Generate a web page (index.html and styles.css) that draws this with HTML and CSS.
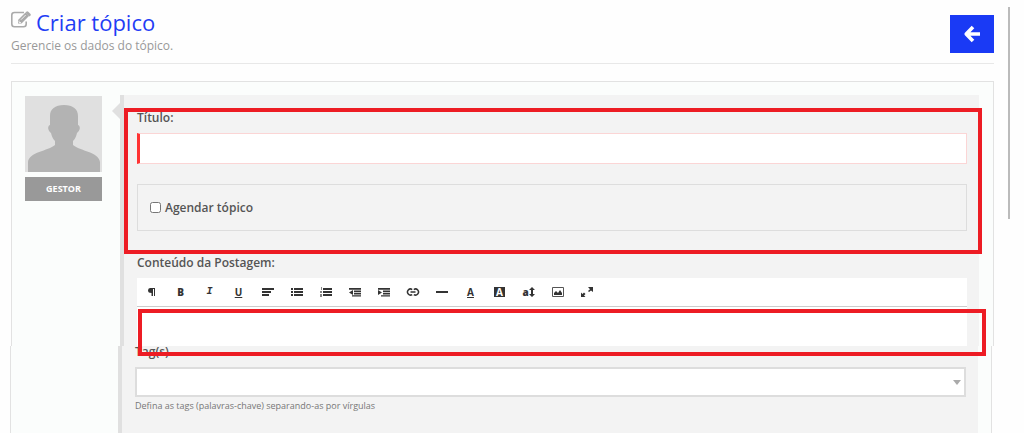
FILE: index.html
```html
<!DOCTYPE html>
<html lang="pt-BR">
<head>
  <meta charset="UTF-8" />
  <title>Criar tópico</title>
  <link rel="stylesheet" href="styles.css">
</head>
<body>
  <header class="page-header">
    <div>
      <h1>
        <svg class="edit-icon" width="21" height="18" viewBox="0 0 21 18" fill="none" stroke="#aaa">
          <path stroke-width="1.600" d="M13 1.500H3.500Q.8 1.500.8 4v9q0 2.700 2.700 2.700h9q2.700 0 2.700-2.700v-2.500"/>
          <path fill="#aaa" stroke="none" d="M7 9 14.500 1.500l3.500 3.500L10.500 12.500H7zM15.300.8q1-1 2 0l2 2q1 1 0 2l-.7.700-4-4z"/>
          <path stroke="#fefefe" stroke-width=".8" d="M10 8.700l4.700-4.700M8 9.500v2h2"/>
        </svg>
        Criar tópico
      </h1>
      <p>Gerencie os dados do tópico.</p>
    </div>
    <button class="back-btn" type="button" title="Voltar">
      <svg width="18" height="18" viewBox="0 0 18 18" fill="none" stroke="#fff" stroke-width="3.600">
        <path stroke-linejoin="round" d="M10 2 3.200 9l6.800 7M3.500 9H17"/>
      </svg>
    </button>
  </header>

  <form class="topic">
    <div class="panel">
      <aside class="author">
        <svg class="avatar" width="77" height="76" viewBox="0 0 77 76">
          <path fill="#e0e0e0" d="M0 0h77v76H0z"/>
          <path fill="#b3b3b3" d="M39 9c9 0 14 4 14 11v9c3 1 2 6-1 8-1 4-2 6-4 8v4c7 6 26 7 27 17v10H3V66c1-10 20-11 27-17v-4c-2-2-3-4-4-8-3-2-4-7-1-8v-9c0-7 5-11 14-11z"/>
        </svg>
        <span class="role">GESTOR</span>
      </aside>

      <div class="post">
        <div class="group">
          <label class="title" for="titulo">Título:</label>
          <input class="text-field" type="text" id="titulo" />
          <div class="schedule">
            <input type="checkbox" id="agendar" />
            <label for="agendar">Agendar tópico</label>
          </div>
          <div class="mark mark-title"></div>
        </div>

        <label class="title" for="conteudo">Conteúdo da Postagem:</label>
        <div class="toolbar">
          <button type="button" title="Formato"><svg viewBox="0 0 14 12"><path d="M5 2h5v8H9V3H8v7H6.500V7Q3 7 3 4.500T5 2z"/></svg></button>
          <button type="button" title="Negrito"><b>B</b></button>
          <button type="button" title="Itálico"><i>I</i></button>
          <button type="button" title="Sublinhado"><u>U</u></button>
          <button type="button" title="Alinhar"><svg viewBox="0 0 14 12"><path d="M1 2h12v2H1zM1 5h9v2H1zM1 8h7v2H1z"/></svg></button>
          <button type="button" title="Lista"><svg viewBox="0 0 14 12"><path d="M1 2h2v2H1zM1 5h2v2H1zM1 8h2v2H1zM4 2h9v2H4zM4 5h9v2H4zM4 8h9v2H4z"/></svg></button>
          <button type="button" title="Lista numerada"><svg viewBox="0 0 14 12"><path d="M4 2h9v2H4zM4 5h9v2H4zM4 8h9v2H4z"/><path opacity=".6" d="M2 1h1v3H2zM1 5h2v2H1zM1 8h2v3H1z"/></svg></button>
          <button type="button" title="Diminuir recuo"><svg viewBox="0 0 14 12"><path d="M1 2h12v1.800H1zM6 4.600h7V6.200H6zM6 7h7v1.400H6zM4 9.200h9v1.300H4zM1 6.500l4-2.500v5z"/></svg></button>
          <button type="button" title="Aumentar recuo"><svg viewBox="0 0 14 12"><path d="M1 2h12v1.800H1zM6 4.600h7V6.200H6zM6 7h7v1.400H6zM4 9.200h9v1.300H4zM5 6.500 1 4v5z"/></svg></button>
          <button type="button" title="Link"><svg viewBox="0 0 14 12"><path fill="none" stroke="#333" stroke-width="1.500" d="M6.200 8.500A3 3 0 1 1 6.200 3.500M7.800 3.500a3 3 0 1 1 0 5M4.500 6h5"/></svg></button>
          <button type="button" title="Linha"><svg viewBox="0 0 14 12"><path d="M1 5h12v2H1z"/></svg></button>
          <button type="button" title="Cor do texto"><u>A</u></button>
          <button type="button" title="Cor de fundo"><span class="filled">A</span></button>
          <button type="button" title="Tamanho"><b>a</b><svg class="arrow" viewBox="0 0 6 12"><path d="M3 1l3 3H4v4h2l-3 3-3-3h2V4H0z"/></svg></button>
          <button type="button" title="Imagem"><svg viewBox="0 0 14 12"><path fill="none" stroke="#555" d="M1.500 1.500h11v9h-11z"/><path d="M3 9V7l2-2 2 2 2-3 2 3v2z"/></svg></button>
          <button type="button" title="Tela cheia"><svg viewBox="0 0 14 12"><path d="M8 1h5v5l-2-1.500L9 6 8 5l2-1.800zM1 6.500 2.500 8 4 6.500 5.500 8 4 9.500 5.500 11H1z"/></svg></button>
        </div>
        <div class="editor">
          <textarea id="conteudo"></textarea>
          <div class="mark mark-editor"></div>
        </div>
      </div>
    </div>

    <div class="panel panel-tags">
      <div class="post">
        <label class="title" for="tags">Tag(s)</label>
        <select class="tags" id="tags"><option></option></select>
        <p class="hint">Defina as tags (palavras-chave) separando-as por vírgulas</p>
      </div>
    </div>
  </form>
  <div class="scroll-thumb"></div>
</body>
</html>
```
FILE: styles.css
```css
* { box-sizing: border-box; }

body {
  margin: 0;
  min-height: 100vh;
  padding: 0 30px 0 11px;
  display: flex;
  flex-direction: column;
  background: #fefefe;
  color: #555;
  font-family: "Open Sans", sans-serif;
  font-size: 12px;
  line-height: 16px;
}

h1, p { margin: 0; }

button {
  padding: 0;
  border: none;
  background: none;
  cursor: pointer;
}

.page-header {
  display: flex;
  justify-content: space-between;
  align-items: flex-start;
  height: 64px;
  padding-top: 8px;
  border-bottom: 1px solid #e8e8e8;
}

h1 {
  display: flex;
  gap: 4px;
  color: #1f3df5;
  font-size: 22px;
  font-weight: 400;
  line-height: 28px;
}

.edit-icon { margin-top: 3px; }

.page-header p {
  margin-top: 2px;
  color: #999;
}

.back-btn {
  display: flex;
  align-items: center;
  justify-content: center;
  width: 44px;
  height: 38px;
  margin-top: 7px;
  background: #1a3af5;
}

.topic {
  display: flex;
  flex: 1;
  flex-direction: column;
  margin-top: 17px;
}

.panel {
  display: flex;
  padding: 13px 14px 0 13px;
  border: 1px solid #e2e2e2;
  border-bottom: none;
  background: #fbfdfc;
}

.author {
  display: flex;
  flex-direction: column;
  align-items: center;
  gap: 5px;
  width: 77px;
  margin-right: 18px;
  padding-top: 1px;
}

.role {
  width: 100%;
  background: #999;
  color: #fff;
  font-size: 9px;
  font-weight: 700;
  line-height: 24px;
  text-align: center;
}

.post {
  position: relative;
  flex: 1;
  padding: 15px 12px 0 13px;
  border-left: 4px solid #e0e0e0;
  background: #f3f3f3;
}

.author + .post::before {
  content: "";
  position: absolute;
  top: 8px;
  left: -12px;
  border: 8px solid transparent;
  border-left: none;
  border-right-color: #e0e0e0;
}

.group {
  position: relative;
  padding-bottom: 24px;
}

.title {
  display: block;
  font-weight: 600;
}

.text-field {
  display: block;
  width: 100%;
  height: 31px;
  margin: 7px 0 20px;
  border: 1px solid #fbd5d5;
  border-left: 3px solid #f33;
  background: #fff;
}

.schedule {
  display: flex;
  align-items: center;
  gap: 4px;
  height: 47px;
  padding-left: 12px;
  border: 1px solid #ddd;
  font-weight: 600;
}

.schedule input {
  width: 11px;
  height: 11px;
  margin: 0;
}

/* red highlight boxes */
.mark {
  position: absolute;
  z-index: 1;
  border: 4px solid #ed1c24;
  pointer-events: none;
}

.mark-title { inset: -2px -15px 1px -13px; }
.mark-editor { inset: 2px -19px -10px 1px; }

.toolbar {
  display: flex;
  align-items: center;
  height: 29px;
  margin-top: 7px;
  border-bottom: 1px solid #ccc;
  background: #fff;
}

.toolbar button {
  display: flex;
  align-items: center;
  justify-content: center;
  width: 29px;
  height: 28px;
  color: #333;
  font: 700 10px/12px "Open Sans", sans-serif;
}

.toolbar svg {
  width: 14px;
  height: 12px;
  fill: #333;
}

.toolbar i { font-family: "Liberation Mono", monospace; }
.toolbar .arrow { width: 6px; }

.filled {
  width: 11px;
  background: #333;
  color: #fff;
  line-height: 10px;
}

.editor {
  position: relative;
  height: 39px;
}

.editor textarea {
  display: block;
  width: 100%;
  height: 100%;
  border: none;
  background: #fff;
  resize: none;
}

/* the tags block sits slightly left of the block above */
.panel-tags {
  flex: 1;
  margin: 0 2px 0 -1px;
  padding: 0 13px 0 107px;
  border-top: none;
}

.panel-tags .post { padding-top: 0; }
.panel-tags .title { line-height: 12px; }

.tags {
  display: block;
  width: 100%;
  height: 30px;
  margin: 9px 0 1px;
  border: 2px solid #ddd;
  appearance: none;
  background: #fff;
}

.panel-tags .post::after {
  content: "";
  position: absolute;
  top: 34px;
  right: 17px;
  border: 4px solid transparent;
  border-top: 5px solid #aaa;
  border-bottom: none;
  pointer-events: none;
}

.hint {
  color: #777;
  font-size: 9px;
}

.scroll-thumb {
  position: absolute;
  top: 7px;
  right: 14px;
  width: 2px;
  height: 212px;
  background: #bbb;
}
```
